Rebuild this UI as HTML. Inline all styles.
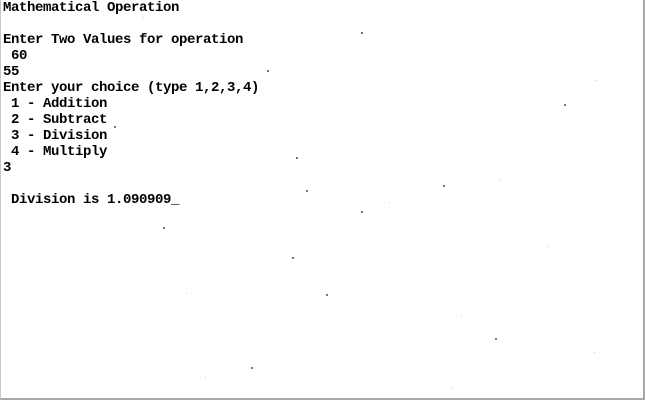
<!DOCTYPE html>
<html><head><style>
html,body{margin:0;padding:0;background:#fff;}
body{width:645px;height:401px;position:relative;overflow:hidden;}
.frame{position:absolute;left:0;top:0;width:642px;height:398px;border-left:1px solid #c8c8c8;border-right:2px solid #a8a8a8;border-bottom:2px solid #a8a8a8;box-sizing:content-box;}
pre{position:absolute;left:3px;top:0px;margin:0;font-family:"Liberation Mono",monospace;font-size:14px;letter-spacing:-0.4px;line-height:16px;color:#000;font-weight:bold;}
.d{position:absolute;width:2px;height:2px;background:#777;}
.l{position:absolute;width:1px;height:1px;background:#ccc;}
</style></head><body>
<div class="frame"></div>
<pre>Mathematical Operation

Enter Two Values for operation
 60
55
Enter your choice (type 1,2,3,4)
 1 - Addition
 2 - Subtract
 3 - Division
 4 - Multiply
3

 Division is 1.090909_</pre>
<div class="d" style="left:361px;top:32px"></div>
<div class="d" style="left:267px;top:70px"></div>
<div class="d" style="left:564px;top:104px"></div>
<div class="d" style="left:114px;top:126px"></div>
<div class="d" style="left:296px;top:157px"></div>
<div class="d" style="left:443px;top:185px"></div>
<div class="d" style="left:306px;top:190px"></div>
<div class="d" style="left:361px;top:211px"></div>
<div class="d" style="left:163px;top:227px"></div>
<div class="d" style="left:292px;top:257px"></div>
<div class="d" style="left:326px;top:294px"></div>
<div class="d" style="left:495px;top:338px"></div>
<div class="d" style="left:251px;top:367px"></div>
<div class="l" style="left:143px;top:17px"></div>
<div class="l" style="left:595px;top:80px"></div>
<div class="l" style="left:500px;top:180px"></div>
<div class="l" style="left:389px;top:202px"></div>
<div class="l" style="left:548px;top:246px"></div>
<div class="l" style="left:186px;top:293px"></div>
<div class="l" style="left:461px;top:315px"></div>
<div class="l" style="left:594px;top:352px"></div>
<div class="l" style="left:205px;top:377px"></div>
<div class="l" style="left:452px;top:387px"></div>
</body></html>
